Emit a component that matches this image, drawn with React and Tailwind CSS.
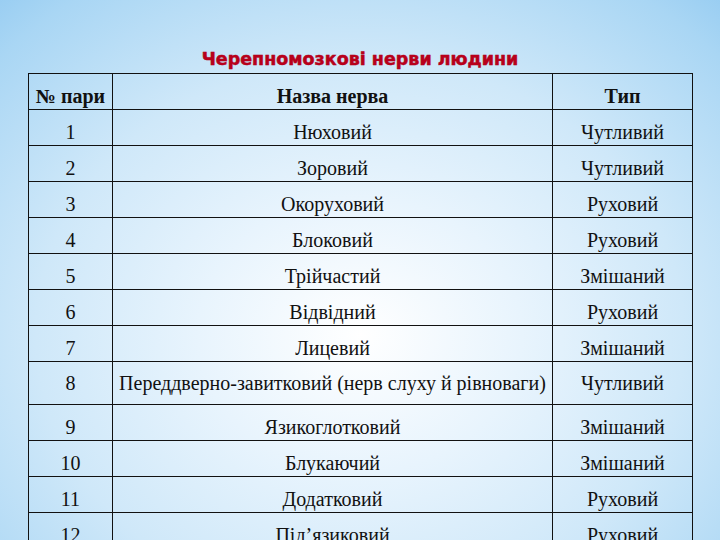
import React from 'react'

const rows = [
  ['1', 'Нюховий', 'Чутливий'],
  ['2', 'Зоровий', 'Чутливий'],
  ['3', 'Окоруховий', 'Руховий'],
  ['4', 'Блоковий', 'Руховий'],
  ['5', 'Трійчастий', 'Змішаний'],
  ['6', 'Відвідний', 'Руховий'],
  ['7', 'Лицевий', 'Змішаний'],
  ['8', 'Переддверно-завитковий (нерв слуху й рівноваги)', 'Чутливий', true],
  ['9', 'Язикоглотковий', 'Змішаний'],
  ['10', 'Блукаючий', 'Змішаний'],
  ['11', 'Додатковий', 'Руховий'],
  ['12', 'Під’язиковий', 'Руховий'],
]

const cell = 'border-[1.5px] border-[#111] text-center align-middle p-0'

export default function App() {
  return (
    <div className="w-[720px] h-[540px] overflow-hidden bg-[radial-gradient(ellipse_75%_85%_at_50%_62%,#ffffff_0%,#e8f4fd_30%,#cfe8f9_60%,#a9d6f4_90%,#98cdf2_100%)]">
      <div className="pt-[49px]">
        <div className="h-[24px] leading-[20px] text-center text-[17.5px] font-bold text-[#b8001b] font-['DejaVu_Sans',sans-serif] [-webkit-text-stroke:0.4px_#b8001b] [text-shadow:0_0_1px_rgba(120,0,0,0.3)]">
          Черепномозкові нерви людини
        </div>
        <table className="ml-[28px] w-[664px] border-collapse table-fixed font-['Liberation_Serif',serif] text-[20px] leading-[24px] text-[#111]">
          <colgroup>
            <col className="w-[84px]" />
            <col className="w-[440px]" />
            <col className="w-[140px]" />
          </colgroup>
          <thead>
            <tr className="h-[36px] font-bold">
              <th className={`${cell} pt-[8px]`}>№ пари</th>
              <th className={`${cell} pt-[8px]`}>Назва нерва</th>
              <th className={`${cell} pt-[8px]`}>Тип</th>
            </tr>
          </thead>
          <tbody>
            {rows.map(([n, name, type, tall]) => (
              <tr key={n} className={tall ? 'h-[43px]' : 'h-[36px]'}>
                <td className={`${cell} ${tall ? 'pt-0' : 'pt-[8px]'}`}>{n}</td>
                <td className={`${cell} ${tall ? 'pt-0' : 'pt-[8px]'} whitespace-nowrap`}>{name}</td>
                <td className={`${cell} ${tall ? 'pt-0' : 'pt-[8px]'}`}>{type}</td>
              </tr>
            ))}
          </tbody>
        </table>
      </div>
    </div>
  )
}
